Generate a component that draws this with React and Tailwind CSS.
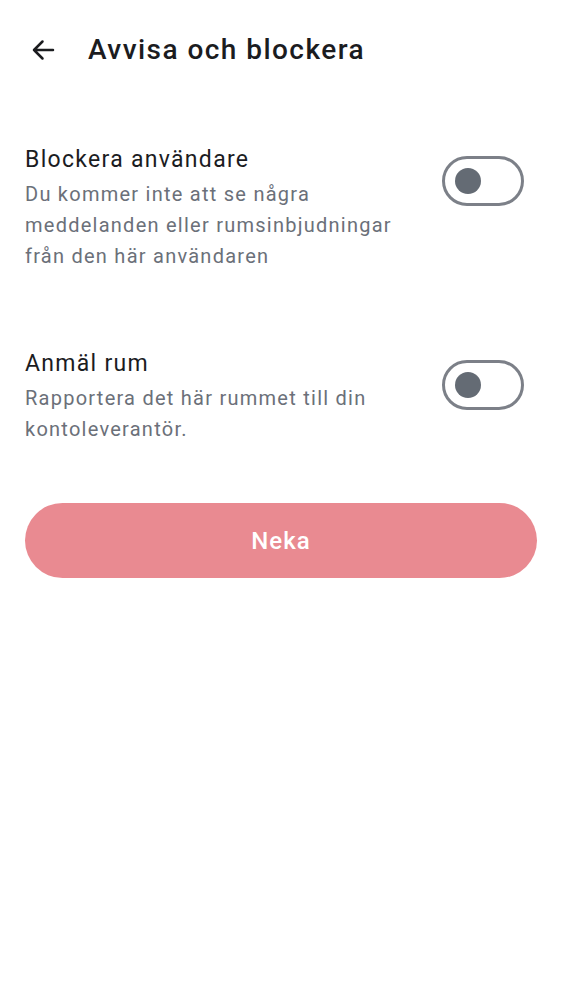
export default function App() {
  const Toggle = () => (
    <div className="w-[82px] h-[50px] rounded-full border-[3px] border-[#7c8088] flex items-center pl-[10px] shrink-0">
      <div className="w-[26px] h-[26px] rounded-full bg-[#646b74]" />
    </div>
  );
  return (
    <div className="w-[562px] h-[1000px] bg-white" style={{ fontFamily: "Roboto, 'Noto Sans', sans-serif" }}>
      <div className="flex items-center h-[100px] pl-[31px]">
        <svg width="24" height="24" viewBox="0 0 24 24" className="text-[#1b1c1f]">
          <path d="M22 12H3M11.5 3.5 3 12l8.5 8.5" fill="none" stroke="currentColor" strokeWidth="2.5" strokeLinecap="round" strokeLinejoin="round" />
        </svg>
        <div className="ml-[33px] text-[28px] leading-[34px] text-[#1b1c1f] font-medium tracking-[1.45px]">Avvisa och blockera</div>
      </div>
      <div className="pt-[44px] px-[25px]">
        <div className="flex items-start justify-between">
          <div className="w-[395px]">
            <div className="text-[23px] leading-[32px] text-[#1b1c1f] tracking-[1.3px]">Blockera användare</div>
            <div className="mt-[3px] text-[20px] leading-[31px] text-[#6b7079] tracking-[1.25px]">Du kommer inte att se några meddelanden eller rumsinbjudningar från den här användaren</div>
          </div>
          <div className="mt-[12px] mr-[13px]"><Toggle /></div>
        </div>
        <div className="flex items-start justify-between mt-[76px]">
          <div className="w-[395px]">
            <div className="text-[23px] leading-[32px] text-[#1b1c1f] tracking-[1.3px]">Anmäl rum</div>
            <div className="mt-[3px] text-[20px] leading-[31px] text-[#6b7079] tracking-[1.25px]">Rapportera det här rummet till din kontoleverantör.</div>
          </div>
          <div className="mt-[12px] mr-[13px]"><Toggle /></div>
        </div>
        <button className="mt-[58px] w-full h-[75px] rounded-full bg-[#e98a91] text-white text-[24px] font-medium tracking-[1px]">Neka</button>
      </div>
    </div>
  );
}
